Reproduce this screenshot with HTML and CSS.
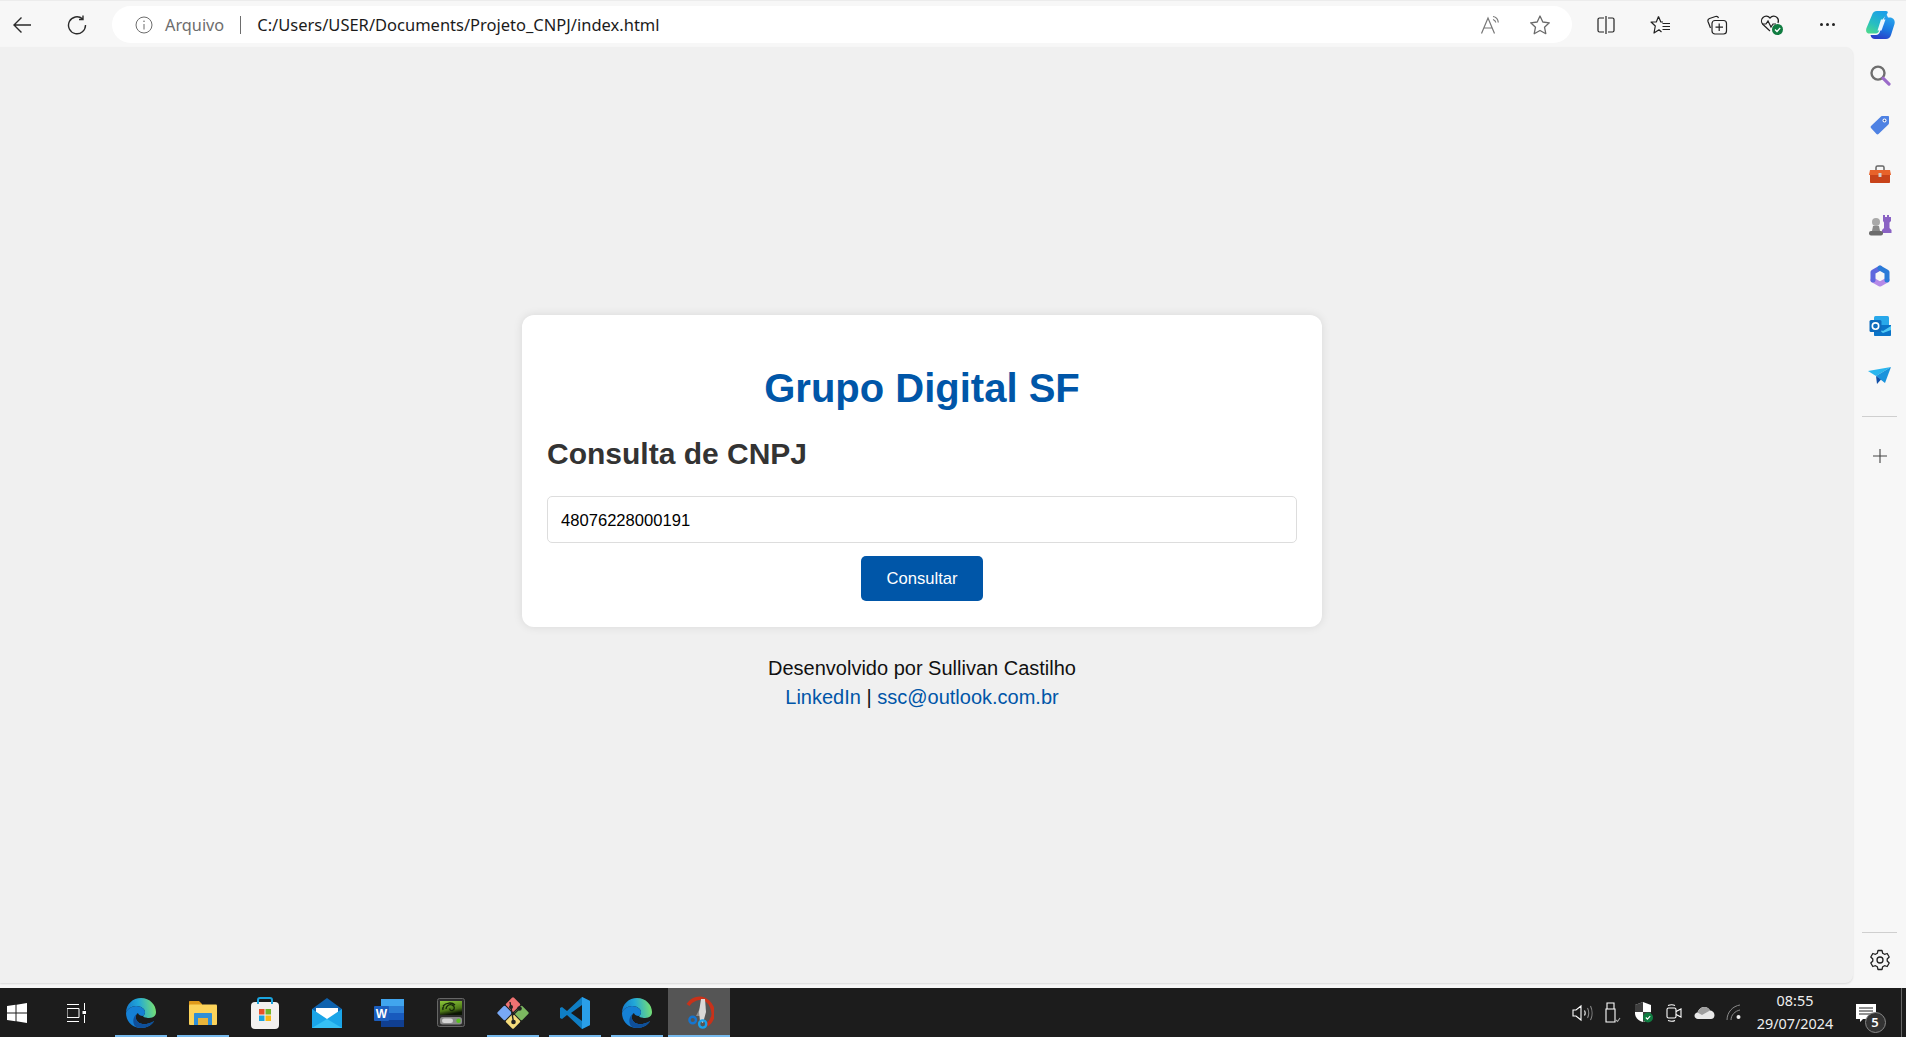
FILE: index.html
```html
<!DOCTYPE html>
<html lang="pt-BR">
<head>
  <meta charset="UTF-8" />
  <meta name="viewport" content="width=device-width, initial-scale=1.0" />
  <title>Consulta de CNPJ</title>
  <link rel="stylesheet" href="styles.css">
</head>
<body>
  <svg class="defs" width="0" height="0" aria-hidden="true">
    <defs>
      <linearGradient id="edgeTop" x1="0" y1="0.6" x2="1" y2="0.5">
        <stop offset="0" stop-color="#1478cc" />
        <stop offset="0.45" stop-color="#22a8d8" />
        <stop offset="1" stop-color="#78e070" />
      </linearGradient>
      <linearGradient id="nvPanel" x1="0" y1="0" x2="0.3" y2="1">
        <stop offset="0" stop-color="#8cc63a" />
        <stop offset="0.7" stop-color="#4e7a18" />
        <stop offset="1" stop-color="#0c1404" />
      </linearGradient>
      <linearGradient id="copilotA" x1="0.7" y1="0" x2="0.2" y2="1">
        <stop offset="0" stop-color="#1c9fe8" />
        <stop offset="0.6" stop-color="#28bfc0" />
        <stop offset="1" stop-color="#4bd890" />
      </linearGradient>
      <linearGradient id="copilotB" x1="0.7" y1="0" x2="0.4" y2="1">
        <stop offset="0" stop-color="#2ab0f0" />
        <stop offset="0.6" stop-color="#1c78e0" />
        <stop offset="1" stop-color="#2a3fc8" />
      </linearGradient>
      <symbol id="edge" viewBox="0 0 32 32">
        <path d="M1 16C1 7 8 1 16 1c9 0 15 7 15 14 0 4-3 6-7 6-3 0-6-1-6-2 1-1 2-2 2-4 0-3-4-6-9-6-4 0-9 3-10 7z" fill="url(#edgeTop)" />
        <path d="M1 16c1-4 6-7 10-7 5 0 9 3 9 6 0 2-1 3-2 4-3 0-5-2-5-3-3 2-3 6 0 9 3 3 10 3 16-1-2 4-7 7-13 7C7 31 1 24 1 16z" fill="#1580d5" />
        <path d="M13 16c-3 2-3 6 0 9 3 3 10 3 16-1-2 4-7 7-13 7-3 0-5-1-6-2-3-4-2-10 3-13z" fill="#0f4f9a" />
      </symbol>
    </defs>
  </svg>

  <div class="page">
    <header class="toolbar">
      <button class="nav-btn back" aria-label="Voltar">
        <svg width="20" height="20" viewBox="0 0 20 20" class="line"><path d="M19 10H2M9.5 2.5 2 10l7.500 7.500" /></svg>
      </button>
      <button class="nav-btn reload" aria-label="Recarregar">
        <svg width="20" height="20" viewBox="0 0 20 20" class="line"><path d="M15.500 3.800A8.500 8.500 0 1 0 18.500 10M16 .5v4h-4" /></svg>
      </button>
      <div class="address">
        <svg class="info" width="18" height="18" viewBox="0 0 18 18"><circle cx="9" cy="9" r="8" fill="none" stroke="#6d6d6d" /><path d="M9 8v5.500" stroke="#6d6d6d" /><circle cx="9" cy="5.300" r=".8" fill="#6d6d6d" /></svg>
        <span class="scheme">Arquivo</span>
        <span class="sep"></span>
        <span class="url">C:/Users/USER/Documents/Projeto_CNPJ/index.html</span>
        <svg class="read" width="22" height="20" viewBox="0 0 22 20" fill="none" stroke="#777"><path d="M1.500 18.500 8 3l6.500 15.500M4 13h8.500" stroke-width="1.200" /><path d="M13 1.500c3 .5 5 3 5.300 6M13 4.500c1.500.4 2.500 1.500 2.800 3" stroke-width="1.200" /></svg>
        <svg class="star" width="22" height="22" viewBox="0 0 22 22" fill="none" stroke="#6a6a6a" stroke-width="1.300"><path d="m11 2 2.800 6 6.500.8-4.800 4.400 1.300 6.500L11 16.500 5.200 19.700l1.300-6.500L1.700 8.800 8.200 8z" stroke-linejoin="round" /></svg>
      </div>
      <div class="tools">
        <svg width="20" height="20" viewBox="0 0 20 20" class="line thin"><path d="M8 3H3.500A1.500 1.500 0 0 0 2 4.500v11A1.500 1.500 0 0 0 3.500 17H8M10 1v18M12 3h4.500A1.500 1.500 0 0 1 18 4.500v11a1.500 1.500 0 0 1-1.500 1.500H12" /></svg>
        <svg width="22" height="20" viewBox="0 0 22 20" class="line thin"><path d="M8.500 1.500 10.800 7H13M8.500 1.500 6.300 7H1l4.300 4-1.300 7 5-3.200L11.500 17M12.500 8.500H20M12.500 11.500H20M12.500 14.500H20" stroke-linejoin="round" /></svg>
        <svg width="22" height="20" viewBox="0 0 22 20" class="line thin"><path d="M4.500 13 2 6.500C1.600 5 2.200 4 3.500 3.500l6-2c1.500-.5 2.500 0 3 1.500" /><rect x="6" y="5.500" width="14.500" height="13.500" rx="3" /><path d="M13.200 8.500v7.500M9.500 12.200H17" /></svg>
        <svg width="24" height="22" viewBox="0 0 24 22" class="health">
          <path d="M10 17 3 10.500C1 8.500 1 5.500 3 3.500s5-1.800 7 .5c2-2.300 5-2.500 7-.5 1.500 1.500 1.800 3.500 1 5.500" fill="none" stroke="#222" stroke-width="1.200" />
          <path d="M2 10h4l2-3 3 6 2-3h3" fill="none" stroke="#222" stroke-width="1.200" />
          <circle cx="17.500" cy="15.500" r="5.500" fill="#107c41" />
          <path d="m15 15.500 2 2 3.200-3.500" fill="none" stroke="#fff" stroke-width="1.300" />
        </svg>
        <div class="dots"><i></i><i></i><i></i></div>
      </div>
      <svg class="copilot" width="30" height="30" viewBox="0 0 30 30">
        <path d="M21 3l2 4.500h1.500C28 7.500 30.500 10 29.500 14L26 25c-.8 2.500-2.500 4-5 4H10c-2.500 0-4-1.500-4.500-4H11c2 0 3.500-1.500 4-3.500L19 9z" fill="url(#copilotB)" />
        <path d="M12 1h9c1.500 0 2 .8 1.700 2L18 9 14 21c-.5 1.500-1.500 2.500-3 2.500H4C1.500 23.500.5 21 1.500 18L7 5c.8-2.500 2.500-4 5-4z" fill="url(#copilotA)" />
        <path d="M16 9.500h4.500L16.500 20.500h-4z" fill="#eaf7ff" />
      </svg>
    </header>

    <div class="middle">
      <main class="content">
        <section class="card">
          <h1>Grupo Digital SF</h1>
          <h2>Consulta de CNPJ</h2>
          <input class="cnpj" type="text" value="48076228000191" />
          <button class="submit">Consultar</button>
        </section>
        <footer class="credits">
          <p>Desenvolvido por Sullivan Castilho</p>
          <p><a href="#">LinkedIn</a> | <a href="#">ssc@outlook.com.br</a></p>
        </footer>
      </main>

      <aside class="sidebar">
        <svg width="22" height="22" viewBox="0 0 22 22"><circle cx="9" cy="9" r="6.500" fill="none" stroke="#6e6e6e" stroke-width="2.400" /><path d="m14 14 6 6" stroke="#9b6bc9" stroke-width="3.200" stroke-linecap="round" /></svg>
        <svg width="22" height="22" viewBox="0 0 22 22"><path d="M2 12 12 2.500c.5-.5 1-.5 1.500-.5H19c.6 0 1 .4 1 1v6c0 .5-.2 1-.6 1.400L9.500 20c-.6.500-1.500.500-2 0L2 14c-.5-.600-.5-1.400 0-2z" fill="#4f82e3" /><circle cx="15.500" cy="6.500" r="2" fill="#fff" /><circle cx="15.500" cy="6.500" r="1" fill="#2c4fa0" /></svg>
        <svg width="24" height="22" viewBox="0 0 24 22"><path d="M8 6V3.500C8 2.500 8.500 2 9.500 2h5c1 0 1.500.5 1.500 1.500V6" fill="none" stroke="#666" stroke-width="1.500" /><path d="M2 6h20l1 5H1z" fill="#e8622a" /><path d="M2 11h20v7c0 .6-.5 1-1 1H3c-.5 0-1-.4-1-1z" fill="#c8431a" /><rect x="10.500" y="9" width="3" height="4" rx=".5" fill="#cfcfcf" /></svg>
        <svg width="24" height="24" viewBox="0 0 24 24"><path d="M15 2h2v2h2V2h2v2h2v4l-1.500 1.500V15l2 2v3H14v-3l2-2V9.500L15 8z" fill="#8a62c4" /><circle cx="8" cy="9" r="4" fill="#a9a9a9" /><path d="M5 13h6l1 5H4z" fill="#8b8b8b" /><rect x="1" y="18" width="14" height="4.500" rx="2" fill="#6c6c6c" /></svg>
        <svg width="22" height="24" viewBox="0 0 22 24" fill="none" stroke-width="5" stroke-linejoin="round" stroke-linecap="round"><path d="M18 16 11 20 4 16" stroke="#b58ae8" /><path d="M4 16V8l7-4" stroke="#5f68de" /><path d="M11 4l7 4v8" stroke="#2a7bd8" /></svg>
        <svg width="22" height="22" viewBox="0 0 22 22"><rect x="5" y="1" width="15" height="18" rx="1.500" fill="#28a8ea" /><path d="M5 10h17v10c0 .6-.5 1-1 1H6c-.5 0-1-.4-1-1z" fill="#0a74c8" /><path d="m5 12 9 4 8-5v4l-8 3z" fill="#50c8f4" /><rect x="0.500" y="5" width="12" height="12" rx="1.500" fill="#0f6cbd" /><circle cx="6.500" cy="11" r="3.200" fill="none" stroke="#fff" stroke-width="1.600" /></svg>
        <svg width="24" height="20" viewBox="0 0 24 20"><path d="M0 5 23 1 8 10z" fill="#29b6ee" /><path d="M23 1 17 17l-9-7z" fill="#1a93dc" /><path d="m8 10 1 8 4-4.500z" fill="#0f4fa8" /></svg>
        <hr class="rule" />
        <svg class="plus" width="16" height="16" viewBox="0 0 16 16"><path d="M8 1v14M1 8h14" stroke="#444" stroke-width="1.100" /></svg>
        <hr class="rule bottom" />
        <svg class="gear" width="22" height="22" viewBox="0 0 22 22" fill="none" stroke="#222" stroke-width="1.300"><path d="m9 1.500 4 0 .7 2.800 1.800 1 2.700-.8 2 3.500-2 2 0 2 2 2-2 3.500-2.700-.8-1.800 1-.7 2.800-4 0-.7-2.800-1.800-1-2.700.8-2-3.500 2-2 0-2-2-2 2-3.500 2.700.8 1.800-1z" stroke-linejoin="round" /><circle cx="11" cy="11" r="3" /></svg>
      </aside>
    </div>

    <nav class="taskbar">
      <svg class="start" width="20" height="20" viewBox="0 0 20 20" fill="#fff"><path d="M0 3l8.500-1.200v7.700H0zM9.500 1.700 20 0v9.500H9.500zM0 10.500h8.500v7.700L0 17zM9.500 10.500H20V20L9.500 18.300z" /></svg>
      <svg class="taskview" width="20" height="20" viewBox="0 0 20 20" fill="none" stroke="#fff"><path d="M0 1.500h12M0 5.500h12v9H0zM0 18.500h12M17.500 0v7M17.500 12v8" /><rect x="15.500" y="8" width="3.500" height="3" fill="#fff" stroke="none" /></svg>
      <ul class="apps">
        <li class="app open"><svg width="32" height="32"><use href="#edge" /></svg></li>
        <li class="app open">
          <svg width="28" height="24" viewBox="0 0 28 24"><path d="M1 0h9l3 3v3H0V1c0-.6.400-1 1-1z" fill="#e09a1a" /><rect x="0" y="3.500" width="28" height="20.500" rx="1" fill="#fcd35a" /><path d="M5 24V13c0-.6.400-1 1-1h16c.6 0 1 .4 1 1v11h-4v-7H9v7z" fill="#2f8fd8" /><rect x="9" y="17" width="10" height="7" fill="#e8b43a" /></svg>
        </li>
        <li class="app">
          <svg width="30" height="32" viewBox="0 0 30 32"><rect x="1" y="5" width="28" height="27" rx="4" fill="#f3f1ef" /><path d="M8 7V3c0-1 .6-2 2-2h10c1.400 0 2 1 2 2v4" fill="none" stroke="#1aa5e0" stroke-width="2" /><rect x="9" y="12" width="5.500" height="5.500" fill="#e8512a" /><rect x="15.500" y="12" width="5.500" height="5.500" fill="#72b52a" /><rect x="9" y="18.500" width="5.500" height="5.500" fill="#1aa5e0" /><rect x="15.500" y="18.500" width="5.500" height="5.500" fill="#f8b914" /></svg>
        </li>
        <li class="app">
          <svg width="30" height="30" viewBox="0 0 30 30"><path d="M15 0 30 11v19H0V11z" fill="#0e62ae" /><path d="M4 10h22v9l-11 6-11-6z" fill="#fff" /><path d="M0 11l15 10 15-10v19H0z" fill="#1aa5e8" /><path d="M0 30 15 21l15 9z" fill="#36c0f4" /></svg>
        </li>
        <li class="app">
          <svg width="30" height="30" viewBox="0 0 30 30"><rect x="7" y="1" width="23" height="28" rx="1" fill="#2b7cd3" /><rect x="7" y="1" width="23" height="7" fill="#41a5ee" /><rect x="7" y="15" width="23" height="7" fill="#185abd" /><rect x="7" y="22" width="23" height="7" fill="#103f91" /><rect x="0" y="8" width="15" height="15" rx="1" fill="#1b5ebe" /><text x="7.500" y="20" class="word">W</text></svg>
        </li>
        <li class="app">
          <svg width="28" height="29" viewBox="0 0 28 29"><rect x=".5" y=".5" width="27" height="28" rx="2" fill="#2d2d2d" stroke="#666" /><rect x="3" y="3" width="22" height="14" fill="url(#nvPanel)" /><path d="M9 11c0-3 3-5 6-4 3 .8 3 4.500.5 5.500-2 .5-3-.8-2.500-2M6 8c3-3.500 9-4 12-1M6 12c-.5-2 0-3 1-4" fill="none" stroke="#16280a" stroke-width="1.300" /><rect x="3" y="19" width="22" height="7.500" rx="2.500" fill="#8a8a8a" /><rect x="5" y="20.500" width="11" height="4.500" rx="2.200" fill="#d5d5d5" /><circle cx="21.500" cy="22.700" r="2.200" fill="#58c020" /></svg>
        </li>
        <li class="app open">
          <svg width="32" height="32" viewBox="0 0 32 32">
            <g transform="rotate(45 16 16)">
              <rect x="4.500" y="4.500" width="11" height="11" rx="1.500" fill="#ef7272" />
              <rect x="16.500" y="4.500" width="11" height="11" rx="1.500" fill="#7cb860" />
              <rect x="16.500" y="16.500" width="11" height="11" rx="1.500" fill="#f6dc7c" />
              <rect x="4.500" y="16.500" width="11" height="11" rx="1.500" fill="#78a8f4" />
            </g>
            <path d="M13 5l3.500 20M16 18l7-7" stroke="#222" stroke-width="1.400" fill="none" />
            <circle cx="16.500" cy="25" r="2.300" fill="#222" />
            <circle cx="22.500" cy="11.500" r="2.300" fill="#222" />
            <circle cx="14" cy="10" r="2" fill="#222" />
          </svg>
        </li>
        <li class="app open">
          <svg width="30" height="32" viewBox="0 0 30 32"><path d="M22 0 30 4v24l-8 4L7 18 2 22 0 21V11l2-1 5 4z" fill="#0f7ec4" /><path d="M22 0 30 4v24l-8 4z" fill="#2a9fe8" /><path d="M22 8 11 16l11 8z" fill="#1a1a1a" /></svg>
        </li>
        <li class="app open"><svg width="32" height="32"><use href="#edge" /></svg></li>
        <li class="app open active">
          <svg width="30" height="34" viewBox="0 0 30 34"><path d="M4 9C8 3 15 1 20 3c7 3 10 11 9 17-1 4-3 7-6 9" fill="none" stroke="#c8321a" stroke-width="3.500" /><path d="M12 20 19 6l2 2-3 12z" fill="#8f8f8f" /><path d="M17 3h4l1 13-3 11-3-2-1-9z" fill="#d8d8d8" /><circle cx="8.700" cy="24" r="3.300" fill="none" stroke="#1575d0" stroke-width="2.400" /><circle cx="18.700" cy="28" r="3.600" fill="none" stroke="#1aa0ea" stroke-width="2.400" /></svg>
        </li>
      </ul>
      <div class="tray">
        <svg width="22" height="18" viewBox="0 0 22 18" fill="none" stroke="#fff" stroke-width="1.100"><path d="M1 6h3l5-4v14l-5-4H1zM12.500 6.500c.8 1.500.8 3.500 0 5" /><path d="M15.500 4c1.500 3 1.500 7 0 10M18.500 2c2 4 2 10 0 14" stroke="#888" /></svg>
        <svg width="16" height="21" viewBox="0 0 16 21" fill="none" stroke="#fff" stroke-width="1.100"><path d="M2 1h7v6H2zM1 7h9v13H1z" /><path d="m11 18 1.500 1.500L15 16" stroke="#aaa" /></svg>
        <svg width="20" height="21" viewBox="0 0 20 21"><path d="M9 0 17 3v8c0 5-4 8-8 9-4-1-8-4-8-9V3z" fill="#fff" /><path d="M9 0v10H1V3zM9 10h8c0 5-4 8-8 10z" fill="#1c1c1c" opacity=".85" /><circle cx="14" cy="15.500" r="5" fill="#107c41" /><path d="m11.800 15.500 1.600 1.600 2.800-3" fill="none" stroke="#fff" stroke-width="1.100" /></svg>
        <svg width="16" height="18" viewBox="0 0 16 18" fill="none" stroke="#fff" stroke-width="1.100"><rect x="1" y="4" width="9" height="10" rx="1.500" /><path d="m10 7.500 5-2.500v8l-5-2.500M2 1.500c2.500-1 5-1 7 0M2 16.500c2.500 1 5 1 7 0" /></svg>
        <svg width="21" height="14" viewBox="0 0 21 14" fill="#e8e8e8"><path d="M4 13c-2 0-3.500-1.500-3.500-3.300C.5 8 2 6.700 3.500 6.500 4.500 3 7.500 1 10.500 1c2.500 0 4.500 1.300 5.500 3.500 2.800 0 4.500 2.500 4.500 4.800 0 2-1.500 3.700-3.500 3.700z" /><path d="M3.500 6.500C5 3 7.500 1 10.500 1c2.500 0 4.500 1.300 5.500 3.500L8 9z" fill="#9e9e9e" /></svg>
        <svg width="17" height="17" viewBox="0 0 17 17" fill="none" stroke="#8a8a8a" stroke-width="1"><path d="M1 16C1 8 7 2 14 1M5 16c0-5 4-9 9-10" /><circle cx="12.500" cy="13" r="2" fill="#eee" stroke="none" /></svg>
      </div>
      <div class="clock"><span>08:55</span><span>29/07/2024</span></div>
      <div class="notify">
        <svg width="20" height="18" viewBox="0 0 20 18"><path d="M0 0h20v15H7l-3 3v-3H0z" fill="#fff" /><path d="M3 4h14M3 7h14M3 10h14" stroke="#222" /></svg>
        <span class="badge">5</span>
      </div>
    </nav>
  </div>
</body>
</html>
```

FILE: styles.css
```css
* {
  box-sizing: border-box;
}
html, body {
  margin: 0;
  height: 100%;
}
body {
  font-family: 'Liberation Sans', Arial, sans-serif;
  background: #f7f7f7;
  overflow: hidden;
}
.defs {
  position: absolute;
}
.page {
  height: 100vh;
  display: flex;
  flex-direction: column;
}

/* browser toolbar */
.toolbar {
  height: 47px;
  display: flex;
  align-items: center;
  padding: 1px 0 0 12px;
  border-top: 1px solid #ececec;
  flex-shrink: 0;
}
.nav-btn {
  width: 20px;
  height: 20px;
  padding: 0;
  border: none;
  background: none;
}
.reload {
  margin-left: 35px;
}
.line {
  fill: none;
  stroke: #2b2b2b;
  stroke-width: 1.4;
  display: block;
}
.line.thin {
  stroke-width: 1.2;
  stroke: #222;
}
.address {
  width: 1460px;
  height: 37px;
  margin-left: 25px;
  background: #fff;
  border-radius: 19px;
  display: flex;
  align-items: center;
  padding: 0 21px 0 23px;
}
.scheme {
  margin-left: 12px;
  font-family: 'Noto Sans', sans-serif;
  font-size: 16.3px;
  color: #6d6d6d;
}
.sep {
  width: 1px;
  height: 18px;
  margin: 0 16px;
  background: #6d6d6d;
}
.url {
  font-family: 'Noto Sans', sans-serif;
  font-size: 16.5px;
  color: #1b1b1b;
  flex: 1;
}
.read {
  margin-right: 27px;
}
.tools {
  display: grid;
  grid-auto-flow: column;
  grid-auto-columns: 55.5px;
  align-items: center;
  justify-items: center;
  margin-left: 6px;
}
.dots {
  display: flex;
  gap: 3px;
}
.dots i {
  width: 3px;
  height: 3px;
  border-radius: 50%;
  background: #222;
}
.copilot {
  margin-left: 9px;
}

/* page area */
.middle {
  flex: 1;
  display: flex;
  min-height: 0;
}
.content {
  width: 1853px;
  margin-bottom: 5px;
  padding: 0 9px 3px 0;
  background: #f0f0f0;
  border-radius: 0 8px 8px 0;
  box-shadow: 0 1px 2px rgba(0, 0, 0, 0.12);
  display: flex;
  flex-direction: column;
  align-items: center;
  justify-content: center;
}
.card {
  width: 800px;
  height: 312px;
  padding: 25px;
  background: #fff;
  border-radius: 12px;
  box-shadow: 0 0 10px rgba(0, 0, 0, 0.1);
  display: flex;
  flex-direction: column;
  align-items: center;
}
h1 {
  margin: 25px 0 0;
  font-size: 40px;
  line-height: 46px;
  color: #0056a8;
  text-align: center;
}
h2 {
  align-self: flex-start;
  margin: 26px 0 0;
  font-size: 30px;
  line-height: 34px;
  color: #333;
}
.cnpj {
  width: 750px;
  height: 47px;
  margin-top: 25px;
  padding: 2px 13px 0;
  border: 1px solid #ddd;
  border-radius: 5px;
  font-family: 'Liberation Sans', Arial, sans-serif;
  font-size: 16.6px;
  color: #000;
  background: #fff;
}
.submit {
  width: 122px;
  height: 45px;
  margin-top: 13px;
  border: none;
  border-radius: 5px;
  background: #0056a8;
  color: #fff;
  font-family: 'Liberation Sans', Arial, sans-serif;
  font-size: 16.6px;
}
.credits {
  margin-top: 27px;
  font-size: 20px;
  line-height: 29px;
  color: #111;
  text-align: center;
}
.credits p {
  margin: 0;
}
.credits a {
  color: #0056a8;
  text-decoration: none;
}

/* edge sidebar */
.sidebar {
  width: 53px;
  display: flex;
  flex-direction: column;
  align-items: center;
  padding: 3px 0 17px;
}
.sidebar svg {
  height: 50.17px;
  flex-shrink: 0;
}
.sidebar .rule {
  width: 35px;
  margin: 15px 0 31px;
  border: none;
  border-top: 1px solid #cfcfcf;
}
.sidebar .plus {
  height: 16px;
}
.sidebar .rule.bottom {
  margin: auto 0 16px;
}
.sidebar .gear {
  height: 22px;
}

/* windows taskbar */
.taskbar {
  height: 49px;
  flex-shrink: 0;
  background: #1c1c1c;
  display: flex;
  align-items: center;
  color: #fff;
  padding-left: 7px;
}
.start {
  flex-shrink: 0;
}
.taskview {
  margin-left: 40px;
  flex-shrink: 0;
}
.apps {
  list-style: none;
  display: flex;
  margin: 0 0 0 23px;
  padding: 0;
  height: 100%;
}
.app {
  width: 62px;
  height: 100%;
  display: flex;
  align-items: center;
  justify-content: center;
  position: relative;
}
.app.open::after {
  content: '';
  position: absolute;
  left: 5px;
  right: 5px;
  bottom: 0;
  height: 2px;
  background: #76b9ed;
}
.app.active {
  background: #555;
}
.app.active::after {
  left: 0;
  right: 0;
}
.word {
  font-family: 'Liberation Sans', Arial, sans-serif;
  font-size: 12px;
  font-weight: bold;
  fill: #fff;
  text-anchor: middle;
}
.tray {
  display: grid;
  grid-auto-flow: column;
  grid-auto-columns: 30.4px;
  align-items: center;
  justify-items: center;
  margin-left: auto;
}
.clock {
  width: 90px;
  display: flex;
  flex-direction: column;
  align-items: center;
  gap: 5px;
  font-family: 'Noto Sans', sans-serif;
  font-size: 14.4px;
  line-height: 18px;
  color: #eee;
}
.notify {
  position: relative;
  align-self: stretch;
  width: 46px;
  margin: 0 4px 0 16px;
  border-right: 1px solid #666;
  display: flex;
  align-items: center;
}
.badge {
  position: absolute;
  left: 8.5px;
  top: 23.5px;
  width: 21px;
  height: 21px;
  border-radius: 50%;
  background: #333;
  border: 1px solid #888;
  font-family: 'Noto Sans', sans-serif;
  font-size: 13px;
  font-weight: 600;
  line-height: 19px;
  text-align: center;
}
```
